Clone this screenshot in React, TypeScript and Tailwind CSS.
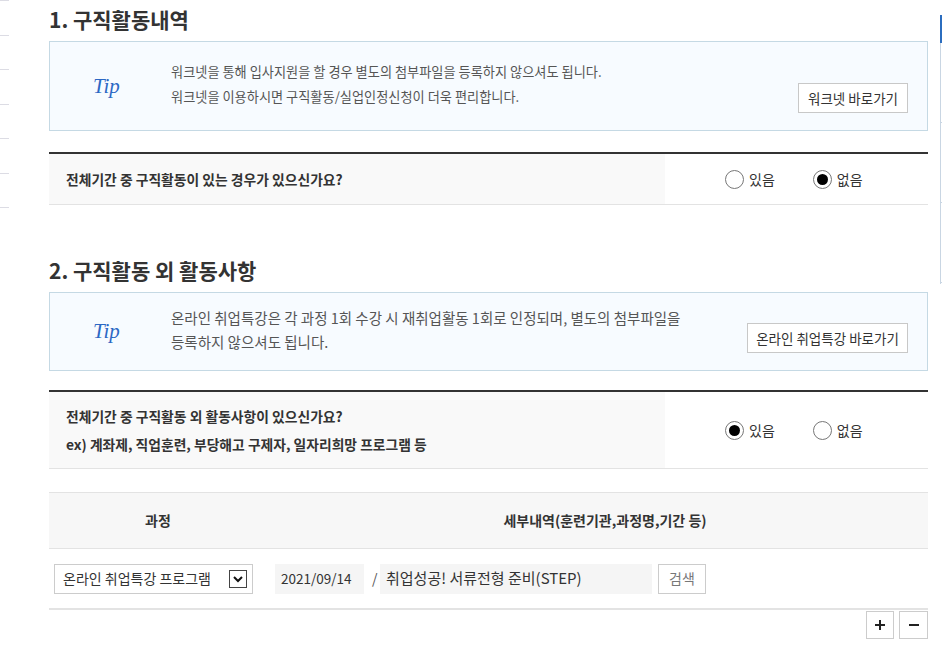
import { type ReactNode } from 'react';

const FONT = '"Noto Sans CJK KR", "Noto Sans", sans-serif';

function TipMark() {
  return (
    <span
      className="text-[21px] italic leading-none text-[#2c68c4]"
      style={{ fontFamily: '"Liberation Serif", serif' }}
    >
      Tip
    </span>
  );
}

function Radio({ checked, label }: { checked: boolean; label: string }) {
  return (
    <label className="flex items-center gap-[5px] text-[14px] text-[#333]">
      <span className="flex h-[19px] w-[19px] items-center justify-center rounded-full border border-[#777] bg-white">
        {checked && <span className="h-[11px] w-[11px] rounded-full bg-black" />}
      </span>
      <span>{label}</span>
    </label>
  );
}

function TipBox({
  heightClass,
  textClass,
  lines,
  button,
  buttonWidth,
}: {
  heightClass: string;
  textClass: string;
  lines: ReactNode[];
  button: string;
  buttonWidth: string;
}) {
  return (
    <div className={`mt-[8px] flex ${heightClass} border border-[#c5d9e4] bg-[#f7fbff]`}>
      <div className="flex w-[121px] shrink-0 items-center pl-[43px]">
        <TipMark />
      </div>
      <div className={`flex flex-1 flex-col justify-center pb-[4px] ${textClass} text-[#555]`}>
        {lines.map((l, i) => (
          <p key={i}>{l}</p>
        ))}
      </div>
      <div className="flex items-end pb-[17px] pr-[19px]">
        <button
          className={`h-[30px] ${buttonWidth} border border-[#c8c8c8] bg-white text-center text-[13.5px] text-[#333]`}
        >
          {button}
        </button>
      </div>
    </div>
  );
}

function QuestionRow({
  heightClass,
  children,
  yes,
}: {
  heightClass: string;
  children: ReactNode;
  yes: boolean;
}) {
  return (
    <div className={`flex ${heightClass} border-b border-t-2 border-b-[#e3e3e3] border-t-[#333]`}>
      <div className="flex w-[616px] flex-col justify-center bg-[#f9f9f9] pl-[17px] text-[13.8px] font-bold text-[#333]">
        {children}
      </div>
      <div className="flex flex-1 items-center gap-[38px] pl-[60px]">
        <Radio checked={yes} label="있음" />
        <Radio checked={!yes} label="없음" />
      </div>
    </div>
  );
}

export default function App() {
  return (
    <div
      className="flex h-[667px] w-[942px] overflow-hidden bg-white text-[#333]"
      style={{ fontFamily: FONT }}
    >
      {/* left strip */}
      <div className="w-[9px] shrink-0">
        {Array.from({ length: 7 }).map((_, i) => (
          <div key={i} className="h-[34.5px] border-t border-[#dcdce4]" />
        ))}
      </div>

      {/* main */}
      <div className="ml-[40px] w-[879px] shrink-0 pt-[5px]">
        <h2 className="h-[28px] text-[21px] font-bold leading-[28px] text-[#333]">1. 구직활동내역</h2>
        <TipBox
          heightClass="h-[90px]"
          textClass="text-[13.2px] leading-[25px]"
          lines={[
            '워크넷을 통해 입사지원을 할 경우 별도의 첨부파일을 등록하지 않으셔도 됩니다.',
            '워크넷을 이용하시면 구직활동/실업인정신청이 더욱 편리합니다.',
          ]}
          button="워크넷 바로가기"
          buttonWidth="w-[110px]"
        />
        <div className="mt-[21px]">
          <QuestionRow heightClass="h-[53px]" yes={false}>
            <p>전체기간 중 구직활동이 있는 경우가 있으신가요?</p>
          </QuestionRow>
        </div>

        <h2 className="mt-[51px] h-[28px] text-[21px] font-bold leading-[28px] text-[#333]">
          2. 구직활동 외 활동사항
        </h2>
        <TipBox
          heightClass="h-[79px]"
          textClass="text-[14.5px] leading-[24px]"
          lines={[
            '온라인 취업특강은 각 과정 1회 수강 시 재취업활동 1회로 인정되며, 별도의 첨부파일을',
            '등록하지 않으셔도 됩니다.',
          ]}
          button="온라인 취업특강 바로가기"
          buttonWidth="w-[161px]"
        />
        <div className="mt-[19px]">
          <QuestionRow heightClass="h-[79px]" yes={true}>
            <p className="leading-[28px]">전체기간 중 구직활동 외 활동사항이 있으신가요?</p>
            <p className="leading-[28px]">ex) 계좌제, 직업훈련, 부당해고 구제자, 일자리희망 프로그램 등</p>
          </QuestionRow>
        </div>

        {/* table */}
        <div className="mt-[23px] border-t border-[#e3e3e3]">
          <div className="flex h-[56px] items-center border-b border-[#e3e3e3] bg-[#f7f7f7] text-[14px] font-bold text-[#333]">
            <div className="w-[218px] text-center">과정</div>
            <div className="flex-1 pl-[15px] text-center">세부내역(훈련기관,과정명,기간 등)</div>
          </div>
          <div className="flex h-[61px] items-center border-b-2 border-[#e3e3e3] text-[14px]">
            <div className="ml-[5px] flex h-[30px] w-[199px] items-center justify-between border border-[#ccc] bg-white pl-[8px] pr-[5px]">
              <span className="text-[#333]">온라인 취업특강 프로그램</span>
              <span className="flex h-[18px] w-[18px] items-center justify-center border border-[#444] bg-white">
                <svg width="12" height="12" viewBox="0 0 12 12">
                  <polyline points="2,4 6,8 10,4" fill="none" stroke="#111" strokeWidth="2" />
                </svg>
              </span>
            </div>
            <div className="ml-[22px] flex h-[30px] w-[89px] items-center bg-[#f5f5f5] pl-[6px] text-[13.5px] text-[#333]">
              2021/09/14
            </div>
            <span className="ml-[8px] w-[8px] text-[#555]">/</span>
            <div className="flex h-[30px] w-[272px] items-center bg-[#f5f5f5] pl-[6px] text-[15px] text-[#333]">
              취업성공! 서류전형 준비(STEP)
            </div>
            <button className="ml-[6px] h-[30px] w-[48px] border border-[#ccc] bg-white text-[14px] text-[#777]">
              검색
            </button>
          </div>
        </div>
        <div className="mt-[1px] flex justify-end gap-[5px]">
          <button className="flex h-[28px] w-[28px] items-center justify-center border border-[#ccc] bg-white">
            <svg width="12" height="12" viewBox="0 0 12 12">
              <path d="M6 1v10M1 6h10" stroke="#222" strokeWidth="2" />
            </svg>
          </button>
          <button className="flex h-[28px] w-[29px] items-center justify-center border border-[#ccc] bg-white">
            <svg width="12" height="12" viewBox="0 0 12 12">
              <path d="M1 6h10" stroke="#222" strokeWidth="2" />
            </svg>
          </button>
        </div>
      </div>

      {/* right strip */}
      <div className="ml-[12px] w-[2px] shrink-0 pt-[15px]">
        <div className="h-[28px] bg-[#2b6dbf]" />
        <div className="h-[241px] border-l border-[#c9d6e3]">
          <div className="h-[80px] border-b border-[#c9d6e3]" />
          <div className="h-[80px] border-b border-[#c9d6e3]" />
          <div className="h-[80px] border-b border-[#c9d6e3]" />
        </div>
      </div>
    </div>
  );
}
